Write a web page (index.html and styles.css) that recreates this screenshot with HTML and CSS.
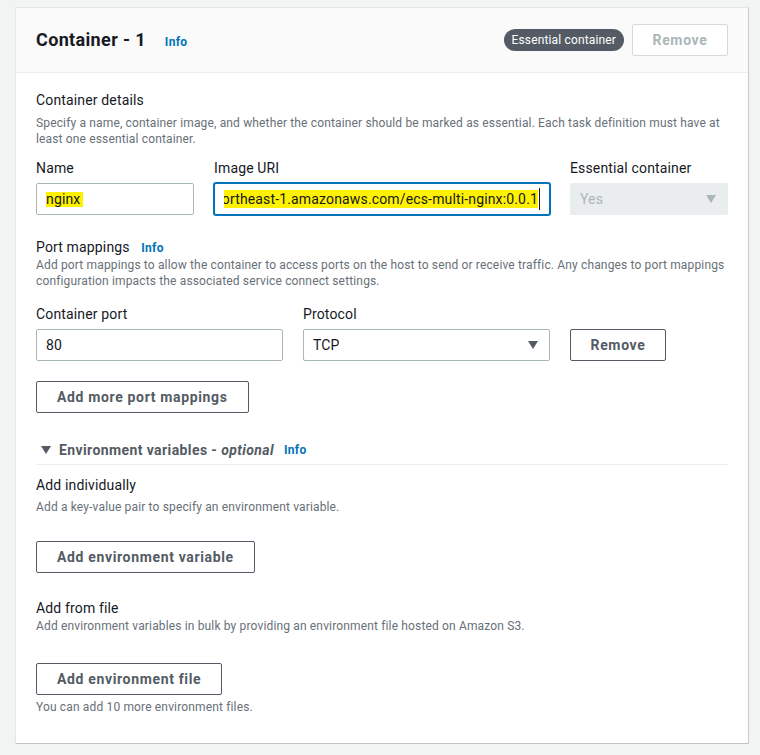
FILE: index.html
```html
<!DOCTYPE html>
<html lang="en">
<head>
<meta charset="utf-8">
<title>Container - 1</title>
<link rel="stylesheet" href="styles.css">
</head>
<body>
<div class="card">
  <div class="card-header">
    <div class="title-wrap">
      <h2 class="title">Container - 1</h2>
      <a class="info info-title">Info</a>
    </div>
    <div class="header-actions">
      <span class="badge">Essential container</span>
      <button class="btn btn-disabled btn-remove">Remove</button>
    </div>
  </div>
  <div class="card-body">
    <div class="section-title">Container details</div>
    <p class="section-desc">Specify a name, container image, and whether the container should be marked as essential. Each task definition must have at least one essential container.</p>

    <div class="details-grid">
      <div class="field">
        <div class="field-label">Name</div>
        <div class="input"><div class="input-scroll start"><span class="hl hl-name">nginx</span></div></div>
      </div>
      <div class="field">
        <div class="field-label">Image URI</div>
        <div class="input focused"><div class="input-scroll end"><span class="hl hl-uri">123456789012.dkr.ecr.ap-northeast-1.amazonaws.com/ecs-multi-nginx:0.0.1</span><span class="caret"></span></div></div>
      </div>
      <div class="field">
        <div class="field-label">Essential container</div>
        <div class="select disabled">
          <span>Yes</span>
          <svg class="arrow" width="10" height="8" viewBox="0 0 10 8"><path d="M0 0H10L5 8Z"/></svg>
        </div>
      </div>
    </div>

    <div class="sub-header">Port mappings <a class="info">Info</a></div>
    <p class="sub-desc">Add port mappings to allow the container to access ports on the host to send or receive traffic. Any changes to port mappings configuration impacts the associated service connect settings.</p>

    <div class="port-grid">
      <div class="field">
        <div class="field-label">Container port</div>
        <div class="input"><div class="input-scroll start">80</div></div>
      </div>
      <div class="field">
        <div class="field-label">Protocol</div>
        <div class="select">
          <span>TCP</span>
          <svg class="arrow" width="10" height="8" viewBox="0 0 10 8"><path d="M0 0H10L5 8Z"/></svg>
        </div>
      </div>
      <div class="field field-btn">
        <button class="btn btn-remove">Remove</button>
      </div>
    </div>

    <button class="btn btn-add-port">Add more port mappings</button>

    <div class="expand-header">
      <svg class="expand-arrow" width="10" height="8" viewBox="0 0 10 8"><path d="M0 0H10L5 8Z"/></svg>
      <span class="expand-title">Environment variables - <em>optional</em></span>
      <a class="info">Info</a>
    </div>

    <div class="env-label first">Add individually</div>
    <p class="env-desc first-desc">Add a key-value pair to specify an environment variable.</p>
    <button class="btn btn-env-var">Add environment variable</button>

    <div class="env-label second">Add from file</div>
    <p class="env-desc second-desc">Add environment variables in bulk by providing an environment file hosted on Amazon S3.</p>
    <button class="btn btn-env-file">Add environment file</button>
    <p class="hint">You can add 10 more environment files.</p>
  </div>
</div>
</body>
</html>
```
FILE: styles.css
```css
html, body {
  margin: 0;
  padding: 0;
  background: #f2f3f3;
  font-family: Roboto, "Liberation Sans", Arial, sans-serif;
  color: #16191f;
  letter-spacing: 0.15px;
}

.card {
  margin: 7px 0 0 15px;
  width: 732px;
  background: #ffffff;
  border: 1px solid #e4e7e7;
  border-right-color: #c6cbcb;
  border-bottom-color: #bfc5c5;
}

.card-header {
  height: 64px;
  padding: 0 20px;
  background: #fafafa;
  border-bottom: 1px solid #eaeded;
  display: flex;
  align-items: center;
  justify-content: space-between;
}

.title-wrap {
  display: flex;
  align-items: baseline;
}

.title {
  margin: 0;
  font-size: 18px;
  line-height: 22px;
  font-weight: 700;
  color: #16191f;
  letter-spacing: 0.35px;
}

.info {
  font-size: 12px;
  font-weight: 700;
  color: #0073bb;
  text-decoration: none;
  margin-left: 8px;
  letter-spacing: 0.3px;
}

.info-title {
  margin-left: 19px;
}

.header-actions {
  display: flex;
  align-items: center;
  gap: 8px;
}

.badge {
  display: inline-block;
  height: 22px;
  line-height: 22px;
  padding: 0 8px;
  border-radius: 11px;
  background: #545b64;
  color: #ffffff;
  font-size: 12px;
}

.btn {
  box-sizing: border-box;
  height: 32px;
  padding: 0 20px;
  border: 1px solid #545b64;
  border-radius: 2px;
  background: #ffffff;
  color: #545b64;
  font-family: inherit;
  font-size: 14px;
  font-weight: 700;
  line-height: 30px;
  letter-spacing: 0.65px;
  display: block;
}

.btn-remove {
  width: 96px;
  padding: 0;
  text-align: center;
}

.btn-disabled {
  border-color: #d5dbdb;
  color: #aab7b8;
}

.card-body {
  padding: 16px 20px 28px;
}

.section-title {
  font-size: 14px;
  line-height: 22px;
}

.section-desc {
  margin: 4px 0 0;
  font-size: 12px;
  line-height: 16px;
  color: #687078;
}

.details-grid {
  margin-top: 10px;
  display: grid;
  grid-template-columns: 158px minmax(0, 1fr) 158px;
  column-gap: 20px;
}

.port-grid {
  margin-top: 14px;
  display: grid;
  grid-template-columns: 247px 247px 96px;
  column-gap: 20px;
}

.field {
  min-width: 0;
}

.field-btn {
  padding-top: 26px;
}

.field-label {
  font-size: 14px;
  line-height: 22px;
  margin-bottom: 4px;
}

.input, .select {
  box-sizing: border-box;
  height: 32px;
  border: 1px solid #aab7b8;
  border-radius: 2px;
  padding: 0 9px;
  display: flex;
  align-items: center;
  font-size: 14px;
  background: #ffffff;
}

.input.focused {
  border-color: #0073bb;
  box-shadow: 0 0 0 1px #0073bb;
}

.input-scroll {
  flex: 1;
  min-width: 0;
  overflow: hidden;
  white-space: nowrap;
  display: flex;
  align-items: center;
}

.input-scroll.end {
  justify-content: flex-end;
}

.hl {
  background: #fff200;
  padding: 1px 0;
  flex: none;
}

.hl-name {
  padding: 0 3px 0 4px;
  margin-left: -4px;
  line-height: 15px;
}

.caret {
  display: inline-block;
  width: 1px;
  height: 22px;
  background: #16191f;
  margin-left: 1px;
  flex: none;
}

.select {
  justify-content: space-between;
  padding-right: 11px;
}

.select .arrow path {
  fill: #545b64;
}

.select.disabled {
  background: #eaeded;
  border-color: #eaeded;
  color: #aab7b8;
}

.select.disabled .arrow path {
  fill: #aab7b8;
}

.sub-header {
  margin-top: 22px;
  font-size: 14px;
  line-height: 20px;
}

.sub-desc {
  margin: -1px 0 0;
  font-size: 12px;
  line-height: 16px;
  color: #687078;
}

.btn-add-port {
  margin-top: 20px;
}

.expand-header {
  margin-top: 26px;
  padding-bottom: 3px;
  border-bottom: 1px solid #eaeded;
  display: flex;
  align-items: center;
  line-height: 22px;
}

.expand-arrow {
  margin-left: 5px;
  margin-right: 8px;
}

.expand-arrow path {
  fill: #545b64;
}

.expand-title {
  font-size: 14px;
  font-weight: 700;
  color: #545b64;
  letter-spacing: 0.4px;
}

.expand-title em {
  font-weight: 700;
}

.expand-header .info {
  margin-left: 10px;
}

.env-label {
  font-size: 14px;
  line-height: 22px;
}

.env-label.first {
  margin-top: 9px;
}

.env-label.second {
  margin-top: 24px;
}

.env-desc {
  margin: 0;
  font-size: 12px;
  line-height: 16px;
  color: #687078;
}

.env-desc.first-desc {
  margin-top: 3px;
}

.env-desc.second-desc {
  margin-top: -1px;
}

.btn-env-var {
  margin-top: 26px;
}

.btn-env-file {
  margin-top: 29px;
}

.hint {
  margin: 4px 0 0;
  font-size: 12px;
  line-height: 16px;
  color: #687078;
}
```
